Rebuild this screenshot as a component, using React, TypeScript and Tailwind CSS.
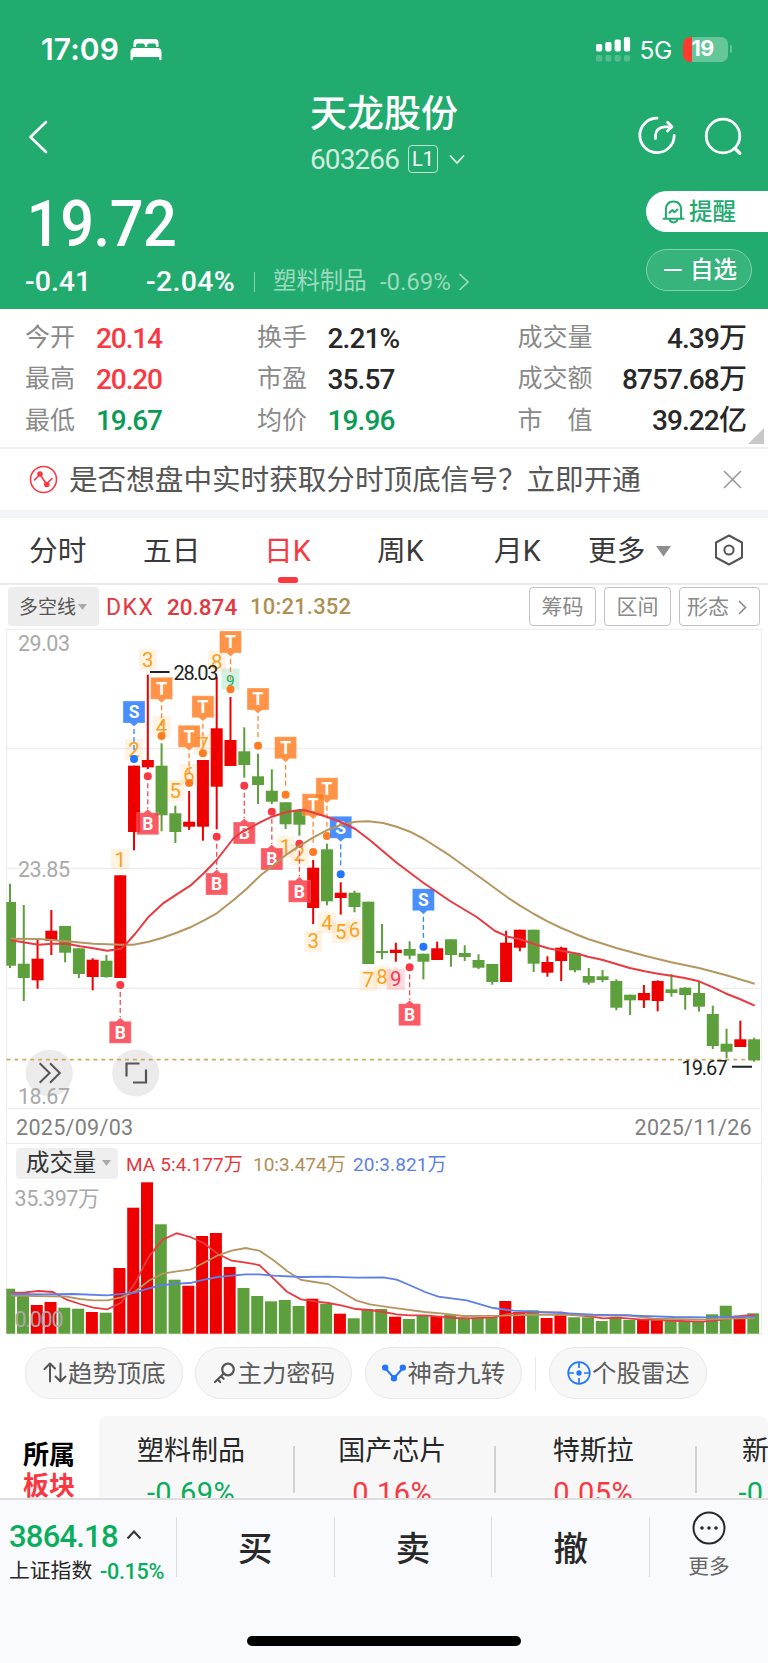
import React from "react";

const RED = "#ee0000";
const GREEN = "#5d9f3c";

/* [up, high, low, bodyTop, bodyBottom, volumeTop] in chart pixels */
type Bar = [number, number, number, number, number, number];

const BARS: Bar[] = [
  [0, 883.7, 968, 902, 965.7, 1288.7],
  [0, 905, 1001, 963.7, 978, 1292],
  [1, 940, 988.7, 958.7, 980.3, 1305],
  [1, 910, 955, 930.7, 941, 1302],
  [0, 926, 962.3, 926, 952.7, 1307.7],
  [0, 948.3, 978, 948.3, 974, 1308.7],
  [1, 958.3, 990.3, 959.7, 977, 1312],
  [0, 955, 977.7, 960.7, 977, 1312.7],
  [1, 875.3, 978, 875.3, 978, 1268],
  [1, 765.7, 850.3, 765.7, 832, 1207.7],
  [1, 674.7, 769, 760, 767.3, 1182.3],
  [0, 743.3, 831.3, 765.7, 815.3, 1224.3],
  [0, 805.7, 843, 813.3, 832, 1279.7],
  [1, 791, 830, 821.7, 826.7, 1285.7],
  [1, 760, 840.7, 760, 826.7, 1236],
  [1, 677, 829.3, 728.3, 786.7, 1233],
  [1, 697, 766, 740, 766, 1267],
  [0, 727.3, 777.7, 751.3, 765, 1288],
  [0, 753.7, 804, 776.3, 785, 1296],
  [0, 769.3, 804, 790.7, 801.7, 1301.3],
  [0, 802.3, 829, 802.3, 824.3, 1300],
  [0, 810, 835.7, 810, 824.7, 1306],
  [1, 860, 924, 867.7, 908, 1298.7],
  [0, 843.7, 905.3, 849.3, 901.3, 1303.7],
  [1, 882.3, 914.7, 892.7, 898, 1313.7],
  [0, 890.7, 912.3, 892.7, 907, 1318.3],
  [0, 901.7, 964, 901.7, 964, 1309.3],
  [0, 924, 959.3, 951, 953, 1309],
  [1, 942.7, 961.7, 949.7, 953, 1316.7],
  [0, 941.3, 959.3, 949, 955.7, 1319],
  [0, 953.7, 979.3, 953.7, 961.7, 1316],
  [1, 941.7, 959.7, 948.3, 960, 1316.3],
  [0, 939.3, 966.7, 939.3, 955, 1314.7],
  [0, 945.3, 961, 953, 957, 1317.7],
  [0, 954.3, 969, 960, 967.7, 1317.7],
  [0, 964, 984.7, 964, 982, 1317],
  [1, 930.7, 982, 942.7, 982, 1301],
  [1, 929.7, 951.3, 929.7, 947.7, 1312],
  [0, 929.7, 972, 929.7, 963.7, 1310.3],
  [1, 956.3, 976.7, 962, 972.7, 1318],
  [1, 946.7, 981, 947.7, 961, 1315.3],
  [0, 953.3, 972.3, 953.3, 970.3, 1317.3],
  [0, 968, 984.7, 976, 982.7, 1317.3],
  [0, 970, 982.3, 976.3, 980, 1321],
  [0, 979.3, 1010.3, 981, 1007.7, 1316.7],
  [0, 994.7, 1015, 994.7, 1000.3, 1320],
  [1, 985, 1008, 993, 1000.3, 1319.3],
  [1, 980.3, 1011.3, 981, 1001, 1320.3],
  [0, 974, 996.7, 989.3, 993, 1320.3],
  [0, 987.3, 1009.7, 987.7, 995, 1321],
  [0, 981.7, 1011.7, 993, 1006.7, 1321],
  [0, 1005.7, 1049, 1014, 1046, 1314.3],
  [0, 1028.7, 1058.3, 1043.7, 1051.7, 1305.7],
  [1, 1020.7, 1047, 1039.3, 1047, 1315.7],
  [0, 1037.7, 1061.7, 1039.3, 1060.3, 1313.3],
];

const cx = (i: number) => 10 + 13.78 * i;

/* kind, bar index, box top, dot y */
const MARKERS: [string, number, number, number][] = [
  ["T", 16, 631, 689.3],
  ["T", 11, 677.3, 736],
  ["T", 14, 695.7, 753.3],
  ["T", 13, 725.3, 783],
  ["T", 18, 688, 745.7],
  ["T", 20, 736.7, 794.7],
  ["T", 23, 777.7, 836],
  ["T", 22, 793.7, 852],
  ["S", 9, 701, 759],
  ["S", 24, 816.3, 874.3],
  ["S", 30, 888.7, 946.7],
  ["B", 10, 812.7, 776.3],
  ["B", 17, 822, 785.7],
  ["B", 15, 873, 836.7],
  ["B", 19, 848, 811.7],
  ["B", 21, 880.3, 843.7],
  ["B", 8, 1021.3, 985],
  ["B", 29, 1003.7, 967.3],
];

/* digit, bar index, centre y, pointer direction (1 = down) */
const COUNTS: [string, number, number, number][] = [
  ["1", 8, 859.5, 1], ["2", 9, 750, 1], ["3", 10, 660, 1], ["4", 11, 727, 1],
  ["5", 12, 791, 1], ["6", 13, 775, 1], ["7", 14, 745, 1], ["8", 15, 661.5, 1],
  ["9g", 16, 679.5, 1],
  ["1", 20, 846.7, -1], ["2", 21, 854, -1], ["3", 22, 941, -1], ["4", 23, 922.5, -1],
  ["5", 24, 931.7, -1], ["6", 25, 929.5, -1], ["7", 26, 980, -1], ["8", 27, 976.5, -1],
  ["9r", 28, 979, -1],
];

const PRICE_RED =
  "11,940.3 23.3,942.3 38.7,944.7 52.7,943.7 66.7,943.7 80,946.3 93.3,948.3 107.3,950.7 121,948.7 126,944 135,934 148.7,916.7 162.7,903.7 176.7,894.3 190.3,885.7 204,873 216.7,860 233,839 241,832.5 250,828 260,822.3 272,816.7 285.7,812.3 299.7,810 305,810.3 326.7,816.7 340.7,822 355.3,829 370,840.3 396.7,862.7 423.3,882.7 450,901 476.7,917 495,931 508,936.7 520,939.3 534,944 548,948.3 561.3,950.7 578,953.7 588,956.7 603,960 616.3,964 629.7,968 644.7,971.3 658,973.7 671.3,975.7 684.7,978 699,981.3 713,987.3 726.3,993.7 739.7,999 754.7,1005.7";
const PRICE_TAN =
  "11,938.7 40,939 66.7,941.3 93.3,943.7 121,944.7 133.3,944.7 148.7,941.7 162.7,937.7 176.7,932.7 190.3,927.3 204,920.3 216.7,913.3 233.3,900.3 246.7,888.7 260,875.8 271.7,866.7 286.7,854.3 300,845.7 313.3,837.3 326.7,830.3 340.7,825 355.3,821.7 368.3,821.3 383.3,823 396.7,826.7 410,831.7 424,839 450,855.7 483.3,879.7 508,897.8 520,905.7 534,914 548,921.7 561.3,928 574.7,933.7 588,939 603,943.7 616.3,948 644.7,955.7 671.3,962.3 699,968 726.3,975.3 754.7,983.7";
const VOL_RED =
  "11,1293 25,1292.3 38.7,1291 52.7,1292 66.7,1299.7 80,1304 93.3,1307.7 107.3,1309.3 121,1302.7 135,1283.3 148.7,1256.7 162.7,1239.7 176.7,1233.3 190.3,1237 204,1243.3 218,1254 231.7,1260.7 245.7,1262.7 259.3,1265 273.3,1278.3 287,1291.7 301,1299.3 314.7,1301.3 328.3,1303 342.3,1305.7 356,1309 370,1310 383.3,1312 396.7,1314.3 410,1315.3 425,1315.3 440,1316.7 455,1318 468.3,1318.3 493.3,1317.3 505,1314.7 513.3,1313.3 533.3,1312.3 561.7,1312.3 573.3,1315 590,1316.3 603.3,1318.3 616.7,1317.7 640,1319.3 660,1320 680,1321 703.3,1321.7 716.7,1320.3 730,1318 743.3,1315.7 755,1315";
const VOL_TAN =
  "11,1295.7 66.7,1296.7 80,1299 93.3,1300.3 107.3,1300.3 121,1297.3 135,1291.7 148.7,1280.7 162.7,1273.7 176.7,1271.3 190.3,1269.7 204,1262.7 218,1255.3 231.7,1250.7 245.7,1248 259.3,1250.7 273.3,1260 287,1271 301,1280 314.7,1282 328.3,1284 342.3,1292.3 356,1300.3 370,1304.3 390,1307.3 425,1312 443.3,1313.7 463.3,1316 503.3,1315.7 523.3,1315 561.7,1314.7 593.3,1315.7 626.7,1315 653.3,1318.7 703.3,1319.7 730,1318.7 755,1318";
const VOL_BLUE =
  "11,1294 43.3,1294.3 73.3,1294 107.3,1295.3 135,1292.7 148.7,1288.3 162.7,1285 176.7,1283.7 190.3,1283 204,1279.7 218,1277 231.7,1275.7 245.7,1274.3 259.3,1274.3 273.3,1275.7 301,1277 328.3,1276.7 356,1277.7 383.3,1277.3 396.7,1279.7 411.7,1286 425,1292 438.3,1296.7 466.7,1300.3 493.3,1308 513.3,1310.7 533.3,1311.7 593.3,1314.7 633.3,1315.7 673.3,1317 706.7,1317.3 730,1316.7 755,1316.7";

function Label(p: {
  x: number; y: number; w?: number; size: number; fill: string; children: string;
}) {
  return (
    <text x={p.x} y={p.y} fontSize={p.size} fill={p.fill} textLength={p.w} lengthAdjust="spacing">
      {p.children}
    </text>
  );
}

function Marker({ kind, i, top, dot }: { kind: string; i: number; top: number; dot: number }) {
  const x = cx(i);
  const color = kind === "T" ? "#ff7d20" : kind === "S" ? "#2277ff" : "#f93843";
  const below = kind === "B";
  return (
    <g>
      <line
        x1={x} x2={x}
        y1={below ? dot + 7 : top + 28}
        y2={below ? top - 4 : dot - 6}
        stroke={color} strokeWidth="1.3" strokeDasharray="5 3" opacity=".9"
      />
      <circle cx={x} cy={dot} r="4" fill={color} />
      <path
        d={
          below
            ? `M${x - 11} ${top}H${x - 4}L${x} ${top - 3.5}L${x + 4} ${top}H${x + 11}V${top + 22}H${x - 11}Z`
            : `M${x - 11} ${top}H${x + 11}V${top + 22}H${x + 4}L${x} ${top + 25.5}L${x - 4} ${top + 22}H${x - 11}Z`
        }
        fill={color} opacity=".82" stroke="#fff" strokeOpacity=".5" strokeWidth=".6"
      />
      <text x={x} y={top + 17.2} fontSize="17.5" fontWeight="700" fill="#fff" textAnchor="middle" fontFamily="Roboto">
        {kind}
      </text>
    </g>
  );
}

function PriceChart() {
  return (
    <svg width="768" height="480" viewBox="0 628 768 480" className="block" fontFamily="Roboto, sans-serif">
      <path d="M6.5 629.4H761.5M6.5 748.5H761.5M6.5 868.3H761.5M6.5 988.3H761.5M6.5 628.8V1108M761.5 628.8V1108" fill="none" stroke="#eeeeee" strokeWidth="1.3" />
      <clipPath id="plot">
        <rect x="6.3" y="628" width="753.8" height="480" />
      </clipPath>
      <circle cx="49.3" cy="1073" r="23.6" fill="#ebebeb" />
      <circle cx="135.7" cy="1073" r="23.6" fill="#ebebeb" />
      <Label x={18} y={650.7} w={52} size={21.5} fill="#a9a9a9">29.03</Label>
      <Label x={18} y={877.2} w={52} size={21.5} fill="#a9a9a9">23.85</Label>
      <Label x={18} y={1103.5} w={52} size={21.5} fill="#a9a9a9">18.67</Label>
      <line x1="6.5" x2="760" y1="1059.7" y2="1059.7" stroke="#d3a763" strokeWidth="1.7" strokeDasharray="4 3.9" />
      <g clipPath="url(#plot)">
        {BARS.map(([up, hi, lo, top, bottom], i) => (
          <g key={i} fill={up ? RED : GREEN}>
            <rect x={cx(i) - 1} y={hi} width="2" height={lo - hi} />
            <rect x={cx(i) - 6} y={top} width="12" height={bottom - top} />
          </g>
        ))}
      </g>
      {COUNTS.map(([t, i, y, dir], k) => {
        const x = cx(i);
        const green = t[1] === "g";
        const tone = green ? "#12b36b" : t[1] === "r" ? "#f5394a" : "#fba01d";
        return (
          <g key={k}>
            <path
              d={dir > 0
                ? `M${x - 9} ${y - 11}H${x + 9}V${y + 10}H${x + 3}L${x} ${y + 12}L${x - 3} ${y + 10}H${x - 9}Z`
                : `M${x - 9} ${y - 10}H${x - 3}L${x} ${y - 12}L${x + 3} ${y - 10}H${x + 9}V${y + 11}H${x - 9}Z`}
              fill={tone} opacity={t[1] ? ".18" : ".12"}
            />
            <text x={x} y={green ? y + 6 : y + 7.3} fontSize={green ? 15.5 : 20.5} fill={tone} textAnchor="middle">{t[0]}</text>
          </g>
        );
      })}
      {MARKERS.map(([kind, i, top, dot], k) => (
        <Marker key={k} kind={kind} i={i} top={top} dot={dot} />
      ))}
      <polyline points={PRICE_TAN} fill="none" stroke="#b59660" strokeWidth="2" strokeLinejoin="round" />
      <polyline points={PRICE_RED} fill="none" stroke="#e83a40" strokeWidth="2" strokeLinejoin="round" />
      <path d="M150 672H169.5M732 1066.8H752" stroke="#222" strokeWidth="2" />
      <Label x={173.5} y={679.7} w={45} size={20} fill="#222">28.03</Label>
      <Label x={681.5} y={1074.8} w={46} size={20} fill="#222">19.67</Label>
      <path d="M39.7 1063.2L49.6 1073L39.7 1082.7M50 1063.2L59.8 1073L50 1082.7" fill="none" stroke="#555" strokeWidth="2" />
      <path d="M126.5 1076.5V1063.5H139.5M146 1069.5V1082.5H133" fill="none" stroke="#555" strokeWidth="2.2" />
    </svg>
  );
}

function VolumeChart() {
  return (
    <svg width="768" height="155" viewBox="0 1180 768 155" className="block" fontFamily="Roboto, 'Noto Sans CJK SC', sans-serif">
      <path d="M6.5 1180V1334H761.5V1180" fill="none" stroke="#eeeeee" strokeWidth="1.3" />
      <Label x={14.5} y={1205.5} w={85} size={21.5} fill="#a9a9a9">35.397万</Label>
      <clipPath id="vol">
        <rect x="6.3" y="1180" width="753" height="155" />
      </clipPath>
      <g clipPath="url(#vol)">
        {BARS.map((b, i) => (
          <rect key={i} x={cx(i) - 6.8} y={b[5]} width="12" height={1333.7 - b[5]} fill={b[0] ? RED : GREEN} />
        ))}
      </g>
      <Label x={14.5} y={1327} w={49} size={21.5} fill="#a9a9a9">0.000</Label>
      <polyline points={VOL_RED} fill="none" stroke="#e83a40" strokeWidth="1.8" />
      <polyline points={VOL_TAN} fill="none" stroke="#b59660" strokeWidth="1.8" />
      <polyline points={VOL_BLUE} fill="none" stroke="#5d7fe6" strokeWidth="1.8" />
    </svg>
  );
}

function StatusBar() {
  return (
    <div className="flex h-[98px] items-center pr-[36px] pl-[41px]">
      <span className="w-[89px] font-[Inter] text-[30px] leading-none font-semibold tracking-[0.1px]">17:09</span>
      <svg width="32" height="23" viewBox="0 0 32 23" fill="#fff">
        <path d="M3.5 9V4.5Q3.5 1 7 1H25Q28.5 1 28.5 4.5V9H26V7.5Q26 5.5 24 5.5H19Q17.2 5.5 17.2 7.5V9H14.8V7.5Q14.8 5.5 13 5.5H8Q6 5.5 6 7.5V9Z" />
        <path d="M.5 14Q.5 10 4.5 10H27.5Q31.5 10 31.5 14V21.5Q31.5 22.3 30.5 22.3Q29.2 22.3 29.2 21.2V19H2.8V21.2Q2.8 22.3 1.5 22.3Q.5 22.3 .5 21.5Z" />
      </svg>
      <svg width="35" height="25" viewBox="0 0 35 25" className="ml-auto" fill="#fff">
        <rect x="0" y="7" width="6.2" height="7.5" rx="1.8" />
        <rect x="9.3" y="5" width="6.2" height="9.5" rx="1.8" />
        <rect x="18.6" y="2.5" width="6.2" height="12" rx="1.8" />
        <rect x="27.9" y="0" width="6.2" height="14.5" rx="1.8" />
        <g opacity=".22">
          <rect x="0" y="18" width="6.2" height="6.5" rx="1.8" />
          <rect x="9.3" y="18" width="6.2" height="6.5" rx="1.8" />
          <rect x="18.6" y="18" width="6.2" height="6.5" rx="1.8" />
          <rect x="27.9" y="18" width="6.2" height="6.5" rx="1.8" />
        </g>
      </svg>
      <span className="mt-[3px] ml-[9px] w-[43px] font-[Inter] text-[24.5px] leading-none tracking-[-0.5px]">5G</span>
      <div className="flex h-[25px] w-[45px] items-center overflow-hidden rounded-[7px] bg-[linear-gradient(90deg,#ff3b30_9px,#65c699_9px)] pl-[9px] font-[Inter] text-[21.5px] leading-none font-bold tracking-[-0.5px]">
        19
      </div>
      <div className="ml-[2px] h-[8px] w-[2.5px] rounded-r-full bg-[#65c699]" />
    </div>
  );
}

function Header() {
  return (
    <header className="h-[309px] bg-[#21ab6e] text-white">
      <StatusBar />
      <div className="flex h-[84px] items-start pr-[23px] pl-[28px]">
        <svg width="22" height="34" viewBox="0 0 22 34" className="mt-[22px]" fill="none" stroke="#fff" strokeWidth="2.6" strokeLinecap="round" strokeLinejoin="round">
          <path d="M18 2L2.5 17L18 32" />
        </svg>
        <div className="ml-[260px] w-[160px]">
          <div className="-mt-[2px] text-[37px] leading-[37px] font-medium whitespace-nowrap">天龙股份</div>
          <div className="mt-[11px] flex h-[30px] items-center">
            <span className="w-[98px] pt-[2px] text-[28px] leading-none tracking-[-0.9px] text-[#d0eedf]">603266</span>
            <span className="flex h-[28px] w-[30px] items-center justify-center rounded-[4px] border border-[#bfe6d3] text-[20px] leading-none">L1</span>
            <svg width="16" height="11" viewBox="0 0 16 11" className="ml-[11px]" fill="none" stroke="#e4f5ec" strokeWidth="1.8">
              <path d="M1 1.5L8 9L15 1.5" />
            </svg>
          </div>
        </div>
        <svg width="40" height="40" viewBox="0 0 40 40" className="mt-[18px] ml-auto" fill="none" stroke="#fff" strokeWidth="2.8" strokeLinecap="round" strokeLinejoin="round">
          <path d="M20 2.2A17.2 17.2 0 1 0 37.2 19.5" />
          <path d="M18.5 22.5V19.5Q19 11.5 27.5 10.8H34" />
          <path d="M30.5 6.2L35 10.8L30.5 15" />
        </svg>
        <svg width="42" height="42" viewBox="0 0 42 42" className="mt-[18px] ml-[26px]" fill="none" stroke="#fff" strokeWidth="2.8" strokeLinecap="round">
          <circle cx="20" cy="20" r="16.8" />
          <path d="M32.5 33L36.8 37.3" strokeWidth="3.4" />
        </svg>
      </div>
      <div className="flex h-[127px]">
        <div className="w-[646px] pt-[10px] pl-[25px]">
          <div className="h-[65px] w-[170px] origin-left scale-x-[0.93] pl-[2px] text-[64px] leading-[65px] font-medium tracking-[-0.5px]">19.72</div>
          <div className="mt-[9px] flex h-[32px] items-center leading-none">
            <span className="w-[121px] text-[28.5px] font-medium tracking-[0px]">-0.41</span>
            <span className="w-[108px] text-[28.5px] font-medium tracking-[0.3px]">-2.04%</span>
            <span className="h-[20px] w-px bg-[#86d1ae]" />
            <span className="ml-[18px] w-[107px] text-[23.4px] text-[#9bdabd]">塑料制品</span>
            <span className="w-[78px] text-[24px] tracking-[-0.05px] text-[#9bdabd]">-0.69%</span>
            <svg width="12" height="18" viewBox="0 0 12 18" fill="none" stroke="#9bdabd" strokeWidth="1.7">
              <path d="M1.5 1L10 9L1.5 17" />
            </svg>
          </div>
        </div>
        <div className="flex w-[122px] flex-col pt-[9px] text-[23.5px] leading-none font-medium">
          <div className="flex h-[41px] items-center rounded-l-full bg-white pl-[16px] text-[#21ab6e]">
            <svg width="23" height="24" viewBox="0 0 23 24" fill="none" stroke="#21ab6e" strokeWidth="2" strokeLinejoin="round" strokeLinecap="round">
              <path d="M3.9 18V10Q3.9 1.5 11.5 1.5Q19.1 1.5 19.1 10V18" />
              <path d="M1.5 18.7H21.5M7.8 20.5Q11.5 24.5 15.2 20.5M7.5 12.8L10.5 10L12.3 12.3L15.5 9.6" />
            </svg>
            <span className="ml-[4px] pt-[2px]">提醒</span>
          </div>
          <div className="mt-[17px] flex h-[42px] w-[106px] items-center rounded-full border-[1.5px] border-[#85d0ad] bg-[#37b37c] pl-[17px]">
            <span className="h-[2px] w-[18px] bg-white" />
            <span className="ml-[8px] pt-[2px]">自选</span>
          </div>
        </div>
      </div>
    </header>
  );
}

const STATS: [string, string, string, string, string, string, string, string][] = [
  ["今开", "20.14", "text-[#fa3842]", "换手", "2.21%", "text-[#282828]", "成交量", "4.39万"],
  ["最高", "20.20", "text-[#fa3842]", "市盈", "35.57", "text-[#282828]", "成交额", "8757.68万"],
  ["最低", "19.67", "text-[#0a9b55]", "均价", "19.96", "text-[#0a9b55]", "市值", "39.22亿"],
];

function Stats() {
  return (
    <section className="relative h-[140px] border-b-2 border-[#f0f0f0] bg-white pt-[8px]">
      {STATS.map((s) => (
        <div key={s[0]} className="flex h-[41.3px] items-center pr-[22px] pl-[25px] leading-none whitespace-nowrap">
          <span className="w-[71px] text-[25px] text-[#8a8a8a]">{s[0]}</span>
          <span className={`w-[161px] pt-[2px] text-[28px] font-medium tracking-[-1.1px] ${s[2]}`}>{s[1]}</span>
          <span className="w-[70.5px] text-[25px] text-[#8a8a8a]">{s[3]}</span>
          <span className={`w-[190px] pt-[2px] text-[28px] font-medium tracking-[-0.9px] ${s[5]}`}>{s[4]}</span>
          <span className="flex w-[75px] justify-between text-[25px] text-[#8a8a8a]">
            {s[6].length === 2 ? s[6].split("").map((c) => <span key={c}>{c}</span>) : s[6]}
          </span>
          <span className="ml-auto pt-[2px] text-[28px] font-medium tracking-[-0.9px] text-[#282828]">{s[7]}</span>
        </div>
      ))}
      <svg width="16" height="16" viewBox="0 0 16 16" className="absolute right-[4px] bottom-[3px]">
        <path d="M16 0V16H0Z" fill="#c8c8c8" />
      </svg>
    </section>
  );
}

function Notice() {
  return (
    <section className="flex h-[61px] items-center bg-white pr-[26px] pl-[29px]">
      <svg width="29" height="29" viewBox="0 0 29 29" fill="none" stroke="#fa3842" strokeWidth="1.6" strokeLinecap="round" strokeLinejoin="round">
        <circle cx="14.5" cy="14.5" r="13" />
        <path d="M5.5 15L11 9.5L17.5 19L23 13.5" />
        <circle cx="11" cy="9" r="2" fill="#fa3842" />
        <circle cx="17.8" cy="19.5" r="2" fill="#fa3842" />
      </svg>
      <span className="ml-[11px] pt-[2px] text-[28.6px] leading-none whitespace-nowrap text-[#565656]">是否想盘中实时获取分时顶底信号？立即开通</span>
      <svg width="19" height="19" viewBox="0 0 19 19" className="ml-auto" stroke="#999" strokeWidth="1.6">
        <path d="M1 1L18 18M18 1L1 18" />
      </svg>
    </section>
  );
}

function Tabs() {
  return (
    <nav className="flex h-[67px] items-center border-b-2 border-[#ececec] bg-white pt-[2px] pl-[29px] text-[28.7px] leading-none whitespace-nowrap text-[#3a3a3a]">
      <span className="w-[114px]">分时</span>
      <span className="w-[121px]">五日</span>
      <span className="relative w-[113px] text-[#fa3842]">
        日K
        <span className="absolute top-[39.5px] left-[13.5px] h-[6px] w-[20px] rounded-[2.5px] bg-[#fa3842]" />
      </span>
      <span className="w-[117px]">周K</span>
      <span className="w-[94px]">月K</span>
      <span className="w-[68px]">更多</span>
      <svg width="15" height="11" viewBox="0 0 15 11">
        <path d="M0 0H15L7.5 10.5Z" fill="#8e8e8e" />
      </svg>
      <svg width="30" height="32" viewBox="0 0 30 32" className="-mt-[3px] ml-[43px]" fill="none" stroke="#555" strokeWidth="2" strokeLinejoin="round">
        <path d="M15 1.5L28 8.5V23.5L15 30.5L2 23.5V8.5Z" />
        <circle cx="15" cy="16" r="4.6" />
      </svg>
    </nav>
  );
}

function Toolbar() {
  return (
    <div className="flex h-[43px] items-center bg-white px-[8px] leading-none whitespace-nowrap">
      <div className="flex h-[39px] w-[91px] items-center rounded-[4px] bg-[#ededed] pl-[11px] text-[19px] text-[#555]">
        <span className="pt-px">多空线</span>
        <svg width="9" height="6" viewBox="0 0 9 6" className="ml-[2px]">
          <path d="M0 0H9L4.5 6Z" fill="#aaa" />
        </svg>
      </div>
      <span className="ml-[7px] w-[61px] pt-px text-[23px] tracking-[1.5px] text-[#e2383e]">DKX</span>
      <span className="w-[83px] pt-px text-[22.5px] font-medium tracking-[0px] text-[#e2383e]">20.874</span>
      <span className="pt-px text-[22px] font-medium tracking-[0.2px] text-[#b08f55]">10:21.352</span>
      <div className="ml-auto flex gap-[8px] text-[21px] text-[#8a8a8a]">
        <span className="flex h-[39px] w-[67px] items-center justify-center rounded-[4px] border-[1.5px] border-[#c2c2c2] pt-px">筹码</span>
        <span className="flex h-[39px] w-[67px] items-center justify-center rounded-[4px] border-[1.5px] border-[#c2c2c2] pt-px">区间</span>
        <span className="flex h-[39px] w-[81px] items-center gap-[9px] rounded-[4px] border-[1.5px] border-[#c2c2c2] pt-px pl-[7px]">
          形态
          <svg width="9" height="15" viewBox="0 0 9 15" fill="none" stroke="#8a8a8a" strokeWidth="1.6">
            <path d="M1 1L7.5 7.5L1 14" />
          </svg>
        </span>
      </div>
    </div>
  );
}

function Chip({ icon, label }: { icon: React.ReactNode; label: string }) {
  return (
    <span className="flex h-[51.5px] w-[157.5px] items-center rounded-full border-[1.5px] border-[#e8e8e8] bg-[#f7f7f7] pl-[15px] text-[24.4px] leading-none whitespace-nowrap text-[#5c5c5c]">
      <span className="flex w-[27px] justify-center">{icon}</span>
      <span className="pt-[2px]">{label}</span>
    </span>
  );
}

function Chips() {
  return (
    <section className="flex h-[81px] items-start bg-white pt-[12px] pl-[25px]">
      <Chip
        label="趋势顶底"
        icon={
          <svg width="24" height="22" viewBox="0 0 24 22" fill="none" stroke="#555" strokeWidth="2" strokeLinecap="round" strokeLinejoin="round">
            <path d="M7 19.5V1.5L1.5 7M7 1.5L12 6.5M17.5 1.5V19.5L12.5 14.5M17.5 19.5L22.5 14.5" />
          </svg>
        }
      />
      <span className="w-[12px]" />
      <Chip
        label="主力密码"
        icon={
          <svg width="24" height="22" viewBox="0 0 24 22" fill="none" stroke="#555" strokeWidth="2.2" strokeLinecap="round">
            <circle cx="16" cy="7.5" r="5.8" />
            <path d="M11.5 11.8L3 20M5.8 17.5L8.2 20M9 14.2L11.6 16.8" />
          </svg>
        }
      />
      <span className="w-[12.5px]" />
      <Chip
        label="神奇九转"
        icon={
          <svg width="24" height="18" viewBox="0 0 24 18" fill="#2377ff" stroke="#2377ff" strokeWidth="2">
            <path d="M3 4L12 14L21 4" fill="none" />
            <circle cx="3.2" cy="3.6" r="2.2" />
            <circle cx="20.8" cy="3.6" r="2.2" />
            <circle cx="12" cy="14.2" r="2.2" />
          </svg>
        }
      />
      <span className="mx-[13px] mt-[10px] h-[34px] w-px bg-[#e8e8e8]" />
      <Chip
        label="个股雷达"
        icon={
          <svg width="24" height="24" viewBox="0 0 24 24" fill="none" stroke="#2377ff" strokeWidth="1.7">
            <circle cx="12" cy="12" r="10.8" />
            <path d="M12 1V7M12 17V23M1 12H7M17 12H23" />
            <circle cx="12" cy="12" r="1.8" fill="#2377ff" />
          </svg>
        }
      />
    </section>
  );
}

const SECTORS: [string, string, string][] = [
  ["塑料制品", "-0.69%", "text-[#0aad5c]"],
  ["国产芯片", "0.16%", "text-[#fa3842]"],
  ["特斯拉", "0.05%", "text-[#fa3842]"],
  ["新材料", "-0.45%", "text-[#0aad5c]"],
];

function Sectors() {
  return (
    <section className="flex h-[82px] overflow-hidden bg-white">
      <div className="w-[99px] shrink-0 pt-[24px] pl-[23px] text-[26px] leading-[31px] font-bold text-black">
        所属
        <div className="text-[#fa3842]">板块</div>
      </div>
      <div className="flex w-[669px] shrink-0 overflow-hidden rounded-t-[8px] bg-[#f7f7f7] whitespace-nowrap">
        {SECTORS.map(([name, pct, tone], k) => (
          <div key={name} className={k === 0 ? "flex w-[195.5px] shrink-0 pt-[22px]" : k === 3 ? "flex w-[172px] shrink-0 pt-[22px]" : "flex w-[201px] shrink-0 pt-[22px]"}>
            <div className={k === 0 ? "-ml-[10px] flex-1 text-center" : k === 3 ? "flex-1 text-center" : "-ml-[4px] flex-1 text-center"}>
              <div className="text-[27px] leading-[27px] text-[#282828]">{name}</div>
              <div className={`mt-[11px] text-[29px] leading-[34px] tracking-[0.4px] ${tone}`}>{pct}</div>
            </div>
            {k < 3 && <span className="mt-[8px] h-[47px] w-[1.5px] bg-[#d2d2d2]" />}
          </div>
        ))}
      </div>
    </section>
  );
}

function BottomBar() {
  return (
    <footer className="h-[165px] border-t-2 border-[#dedede] bg-[#f9fafd]">
      <div className="flex h-[136px] pt-[17px] text-[#282828]">
        <div className="w-[176px] pl-[9px] leading-none whitespace-nowrap">
          <div className="mt-[3px] flex h-[32px] items-center text-[31px] font-medium tracking-[-0.8px] text-[#0aad5c]">
            3864.18
            <svg width="16" height="10" viewBox="0 0 16 10" className="mb-[3px] ml-[8px]" fill="none" stroke="#333" strokeWidth="2">
              <path d="M1.5 8.5L8 1.5L14.5 8.5" />
            </svg>
          </div>
          <div className="mt-[8px] flex items-center text-[20.8px]">
            <span className="w-[91px] pt-px">上证指数</span>
            <span className="pt-px text-[21.5px] font-medium tracking-[-0.3px] text-[#0aad5c]">-0.15%</span>
          </div>
        </div>
        {["买", "卖", "撤"].map((t) => (
          <div key={t} className="flex h-[60px] w-[157.7px] items-center justify-center border-l border-[#dcdde0] text-[34.5px] leading-none font-medium">
            <span className="pt-[4px]">{t}</span>
          </div>
        ))}
        <div className="flex h-[60px] flex-1 flex-col items-center border-l border-[#dcdde0]">
          <svg width="34" height="34" viewBox="0 0 34 34" className="-mt-[6px] shrink-0" fill="none" stroke="#282828" strokeWidth="2">
            <circle cx="17" cy="17" r="15.5" />
            <g fill="#282828" stroke="none">
              <circle cx="10" cy="17" r="1.8" />
              <circle cx="17" cy="17" r="1.8" />
              <circle cx="24" cy="17" r="1.8" />
            </g>
          </svg>
          <span className="mt-[12px] text-[20.7px] leading-none text-[#666]">更多</span>
        </div>
      </div>
      <div className="mx-auto h-[10px] w-[274px] rounded-full bg-black" />
    </footer>
  );
}

export default function App() {
  return (
    <div className="flex h-[1663px] w-[768px] flex-col overflow-hidden bg-white font-[Roboto,'Noto_Sans_CJK_SC',sans-serif] *:shrink-0">
      <Header />
      <Stats />
      <Notice />
      <div className="h-[8px] bg-[#f1f4f9]" />
      <Tabs />
      <Toolbar />
      <PriceChart />
      <div className="mx-[6px] flex h-[36px] items-center justify-between border border-[#eeeeee] pt-[3px] pr-[9px] pl-[9px] text-[21.5px] leading-none tracking-[0.3px] text-[#808080]">
        <span>2025/09/03</span>
        <span>2025/11/26</span>
      </div>
      <div className="mx-[6px] flex h-[36px] items-center border-x border-[#eeeeee] pt-[2px] pl-[9px] leading-none whitespace-nowrap">
        <div className="flex h-[31px] w-[102px] items-center rounded-[4px] bg-[#efefef] pl-[10px] text-[23.4px] text-[#333]">
          <span className="pt-px">成交量</span>
          <svg width="9" height="6" viewBox="0 0 9 6" className="ml-[6px]">
            <path d="M0 0H9L4.5 6Z" fill="#aaa" />
          </svg>
        </div>
        <div className="flex pt-[3px] text-[19px]">
          <span className="ml-[8px] w-[127px] tracking-[0.1px] text-[#e2383e]">MA 5:4.177万</span>
          <span className="w-[100px] text-[#b08f55]">10:3.474万</span>
          <span className="tracking-[0.1px] text-[#5d7fe6]">20:3.821万</span>
        </div>
      </div>
      <VolumeChart />
      <Chips />
      <Sectors />
      <BottomBar />
    </div>
  );
}
